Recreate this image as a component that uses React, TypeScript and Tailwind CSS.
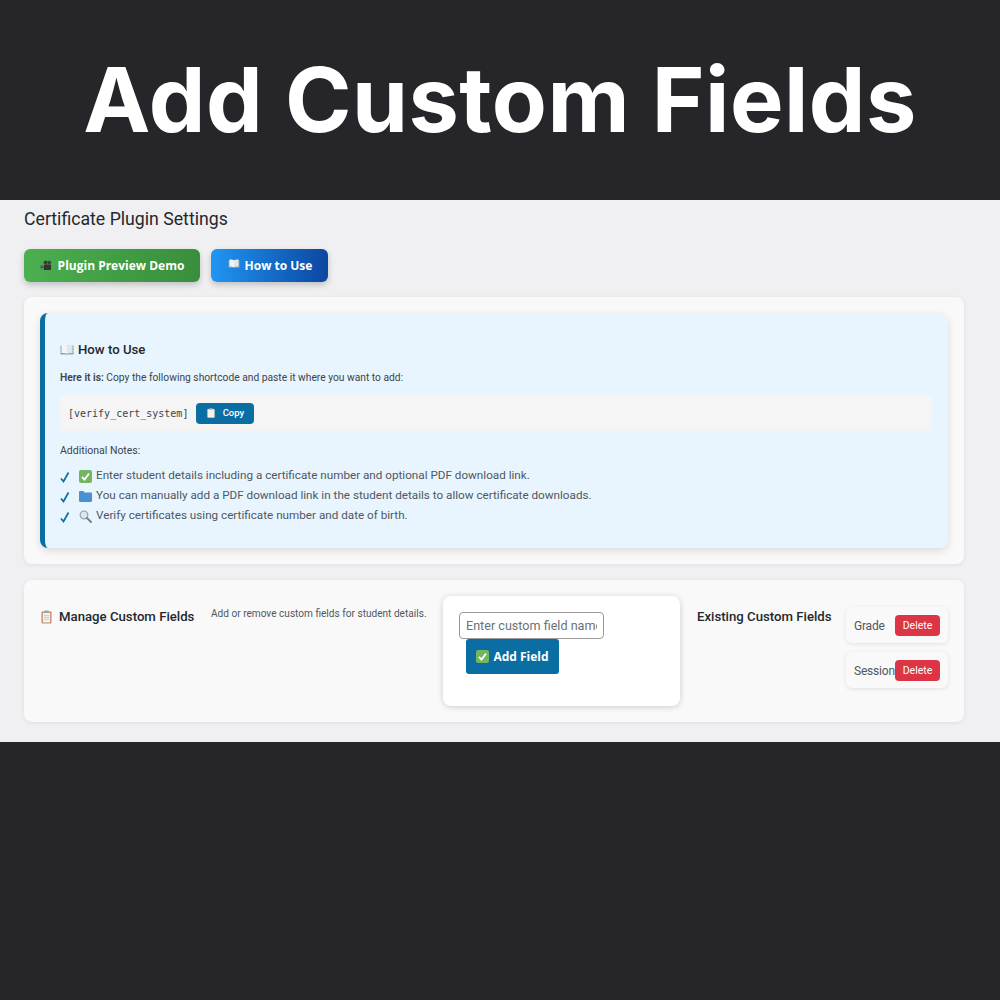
import type { ReactNode } from 'react';

// small drawn stand-ins for the emoji in the screenshot
function BookIcon({ className }: { className?: string }) {
    return (
        <svg viewBox="0 0 14 12" className={className}>
            <path d="M0.5 1.5v9h6l0.5 0.7 0.5-0.7h6v-9z" fill="#8fa3b3" />
            <path d="M1.5 0.8c2-0.5 4-0.3 5.5 0.7v8.3c-1.5-0.9-3.5-1.1-5.5-0.7z" fill="#f2f5f8" />
            <path d="M12.5 0.8c-2-0.5-4-0.3-5.5 0.7v8.3c1.5-0.9 3.5-1.1 5.5-0.7z" fill="#dfe6ec" />
        </svg>
    );
}

function CameraIcon() {
    return (
        <svg viewBox="0 0 14 12" className="w-[13px] h-[11px]">
            <circle cx="6" cy="2.800" r="2.200" fill="#3a3f3a" />
            <circle cx="10" cy="2.800" r="2" fill="#3a3f3a" />
            <rect x="4" y="5" width="8" height="6" rx="1" fill="#333" />
            <path d="M4 7 0.5 5.5v4L4 8.500z" fill="#555" />
        </svg>
    );
}

function ClipboardIcon({ light }: { light?: boolean }) {
    return (
        <svg viewBox="0 0 12 15" className={light ? 'w-[8px] h-[10px] shrink-0' : 'w-[11px] h-[14px] shrink-0'}>
            <rect x="0.5" y="1.5" width="11" height="13" rx="1" fill={light ? '#e9e4d8' : '#c58a6c'} />
            <rect x="2" y="3" width="8" height="10.500" fill={light ? '#f5f3ec' : '#f1f1ee'} />
            <rect x="3.500" y="0.300" width="5" height="2.700" rx="0.600" fill={light ? '#b9b9b0' : '#9aa3a8'} />
            {!light && <path d="M3.200 6h5.600M3.200 8h5.600M3.200 10h5.600" stroke="#b9bec2" strokeWidth="0.800" />}
        </svg>
    );
}

function GreenCheck() {
    return (
        <svg viewBox="0 0 13 13" className="w-[13px] h-[13px] shrink-0">
            <rect width="13" height="13" rx="2" fill="#74b65f" />
            <path d="M3 6.800 5.500 9.600 10 3.600" fill="none" stroke="#fff" strokeWidth="1.800" />
        </svg>
    );
}

function FolderIcon() {
    return (
        <svg viewBox="0 0 13 11" className="w-[13px] h-[11px] shrink-0">
            <path d="M0 1.200C0 .5.5 0 1.200 0h3.200l1.300 1.600h6.100c.7 0 1.200.5 1.200 1.200v7c0 .7-.5 1.200-1.200 1.200H1.200C.5 11 0 10.500 0 9.800z" fill="#4a90d0" />
        </svg>
    );
}

function LensIcon() {
    return (
        <svg viewBox="0 0 13 13" className="w-[13px] h-[13px] shrink-0">
            <circle cx="5" cy="5" r="3.800" fill="#dbe7f0" stroke="#98a6b2" strokeWidth="1.300" />
            <path d="M8 8l4 4" stroke="#7d7f86" strokeWidth="2" strokeLinecap="round" />
        </svg>
    );
}

function Note({ icon, children }: { icon: ReactNode; children: ReactNode }) {
    return (
        <li className="flex items-center h-5 text-[11.700px] text-[#50575e]">
            <svg viewBox="0 0 10 12" className="w-[10px] h-[12px] mr-[9px] mt-[2px] shrink-0">
                <path d="M1 7.500 3.500 10.500 8.500 1.500" fill="none" stroke="#0a6ea3" strokeWidth="1.700" />
            </svg>
            <span className="w-[17px] flex shrink-0">{icon}</span>
            <span>{children}</span>
        </li>
    );
}

function FieldRow({ name }: { name: string }) {
    return (
        <div className="w-[102px] h-9 flex items-center pl-2 bg-[#f9f9f9] rounded-md shadow-[0_1px_4px_rgba(0,0,0,0.1)] overflow-hidden">
            <span className="w-[41px] shrink-0 pt-px text-[12px] tracking-[-0.2px] whitespace-nowrap text-[#50575e]">{name}</span>
            <button className="w-[45px] h-[21px] shrink-0 pt-[2px] rounded bg-[#dc3545] text-white text-[10.500px]">Delete</button>
        </div>
    );
}

export default function App() {
    return (
        <div className="w-[1000px] h-[1000px] bg-[#25252a] font-['Roboto',sans-serif] overflow-hidden">
            <header className="h-[200px] flex items-center justify-center">
                <h1 className="font-['Inter',sans-serif] text-[90px] tracking-[0.450px] font-bold text-white leading-none">Add Custom Fields</h1>
            </header>

            <main className="h-[542px] bg-[#f0f0f2] pl-6 pr-9 pt-[7px]">
                <h2 className="h-6 text-[17.700px] leading-6 text-[#23282d]">Certificate Plugin Settings</h2>

                <div className="flex gap-[11px] mt-[18px] font-['Open_Sans',sans-serif]">
                    <a className="w-[176px] h-[33px] flex items-center justify-center gap-[5px] rounded-md bg-gradient-to-r from-[#4caf50] to-[#388e3c] text-white text-[12px] font-bold shadow-[0_3px_6px_rgba(0,0,0,0.2)]">
                        <CameraIcon />
                        Plugin Preview Demo
                    </a>
                    <a className="w-[117px] h-[33px] flex items-center justify-center gap-[5px] pl-px rounded-md bg-gradient-to-r from-[#2196f3] to-[#0d47a1] text-white text-[12px] font-bold shadow-[0_3px_6px_rgba(0,0,0,0.2)]">
                        <BookIcon className="w-[12px] h-[10px] -mt-1" />
                        How to Use
                    </a>
                </div>

                <section className="mt-[15px] h-[267px] p-4 bg-[#f9f9f9] rounded-lg shadow-[0_1px_4px_rgba(0,0,0,0.08)]">
                    <div className="h-[235px] pl-[15px] pr-4 pt-[27px] bg-[#e8f5fe] border-l-[5px] border-[#0a6ea3] rounded-lg shadow-[0_3px_8px_rgba(0,0,0,0.12)]">
                        <h3 className="flex items-center gap-1 h-5 text-[13.200px] font-medium text-[#23282d]">
                            <BookIcon className="w-[14px] h-3" />
                            How to Use
                        </h3>
                        <p className="mt-[9px] h-[18px] text-[10.250px] leading-[18px] text-[#3c434a]">
                            <strong className="font-semibold">Here it is:</strong> Copy the following shortcode and paste it where you want to add:
                        </p>
                        <div className="mt-[8px] h-9 flex items-center gap-2 pl-2 bg-[#f5f5f5] rounded">
                            <code className="font-['DejaVu_Sans_Mono',monospace] text-[10px] text-[#3c434a]">[verify_cert_system]</code>
                            <button className="w-[58px] h-[21px] flex items-center justify-center gap-[8px] rounded bg-[#0a6ea3] text-white text-[9.500px] font-medium">
                                <ClipboardIcon light />
                                Copy
                            </button>
                        </div>
                        <p className="mt-[10px] h-5 text-[10.500px] leading-5 text-[#3c434a]">Additional Notes:</p>
                        <ul className="mt-[5px]">
                            <Note icon={<GreenCheck />}>Enter student details including a certificate number and optional PDF download link.</Note>
                            <Note icon={<FolderIcon />}>You can manually add a PDF download link in the student details to allow certificate downloads.</Note>
                            <Note icon={<LensIcon />}>Verify certificates using certificate number and date of birth.</Note>
                        </ul>
                    </div>
                </section>

                <section className="mt-4 h-[142px] p-4 flex bg-[#f9f9f9] rounded-lg shadow-[0_1px_4px_rgba(0,0,0,0.08)]">
                    <h3 className="w-[171px] shrink-0 flex items-center gap-[7px] pl-px h-[41px] text-[13.200px] font-medium text-[#23282d]">
                        <ClipboardIcon />
                        Manage Custom Fields
                    </h3>
                    <p className="w-[232px] shrink-0 mt-[10px] text-[10.100px] leading-4 text-[#50575e]">Add or remove custom fields for student details.</p>

                    <div className="w-[237px] h-[110px] shrink-0 pl-4 pt-4 bg-white rounded-lg shadow-[0_1px_6px_rgba(0,0,0,0.18)]">
                        <input
                            placeholder="Enter custom field name"
                            className="block w-[145px] h-[27px] px-[6px] bg-white border border-[#9a9a9a] rounded text-[12.600px] text-[#50575e] placeholder:text-[#6b7178] outline-none"
                        />
                        <button className="ml-[7px] w-[93px] h-[35px] flex items-center justify-center gap-[4px] rounded-[3px] bg-[#0a6ea3] text-white text-[12px] font-bold font-['Open_Sans',sans-serif]">
                            <GreenCheck />
                            Add Field
                        </button>
                    </div>

                    <h3 className="w-[149px] ml-[17px] shrink-0 h-[41px] leading-[41px] text-[13.200px] font-medium text-[#23282d]">Existing Custom Fields</h3>
                    <div className="flex flex-col gap-[9px] mt-[11px]">
                        <FieldRow name="Grade" />
                        <FieldRow name="Session" />
                    </div>
                </section>
            </main>
        </div>
    );
}
